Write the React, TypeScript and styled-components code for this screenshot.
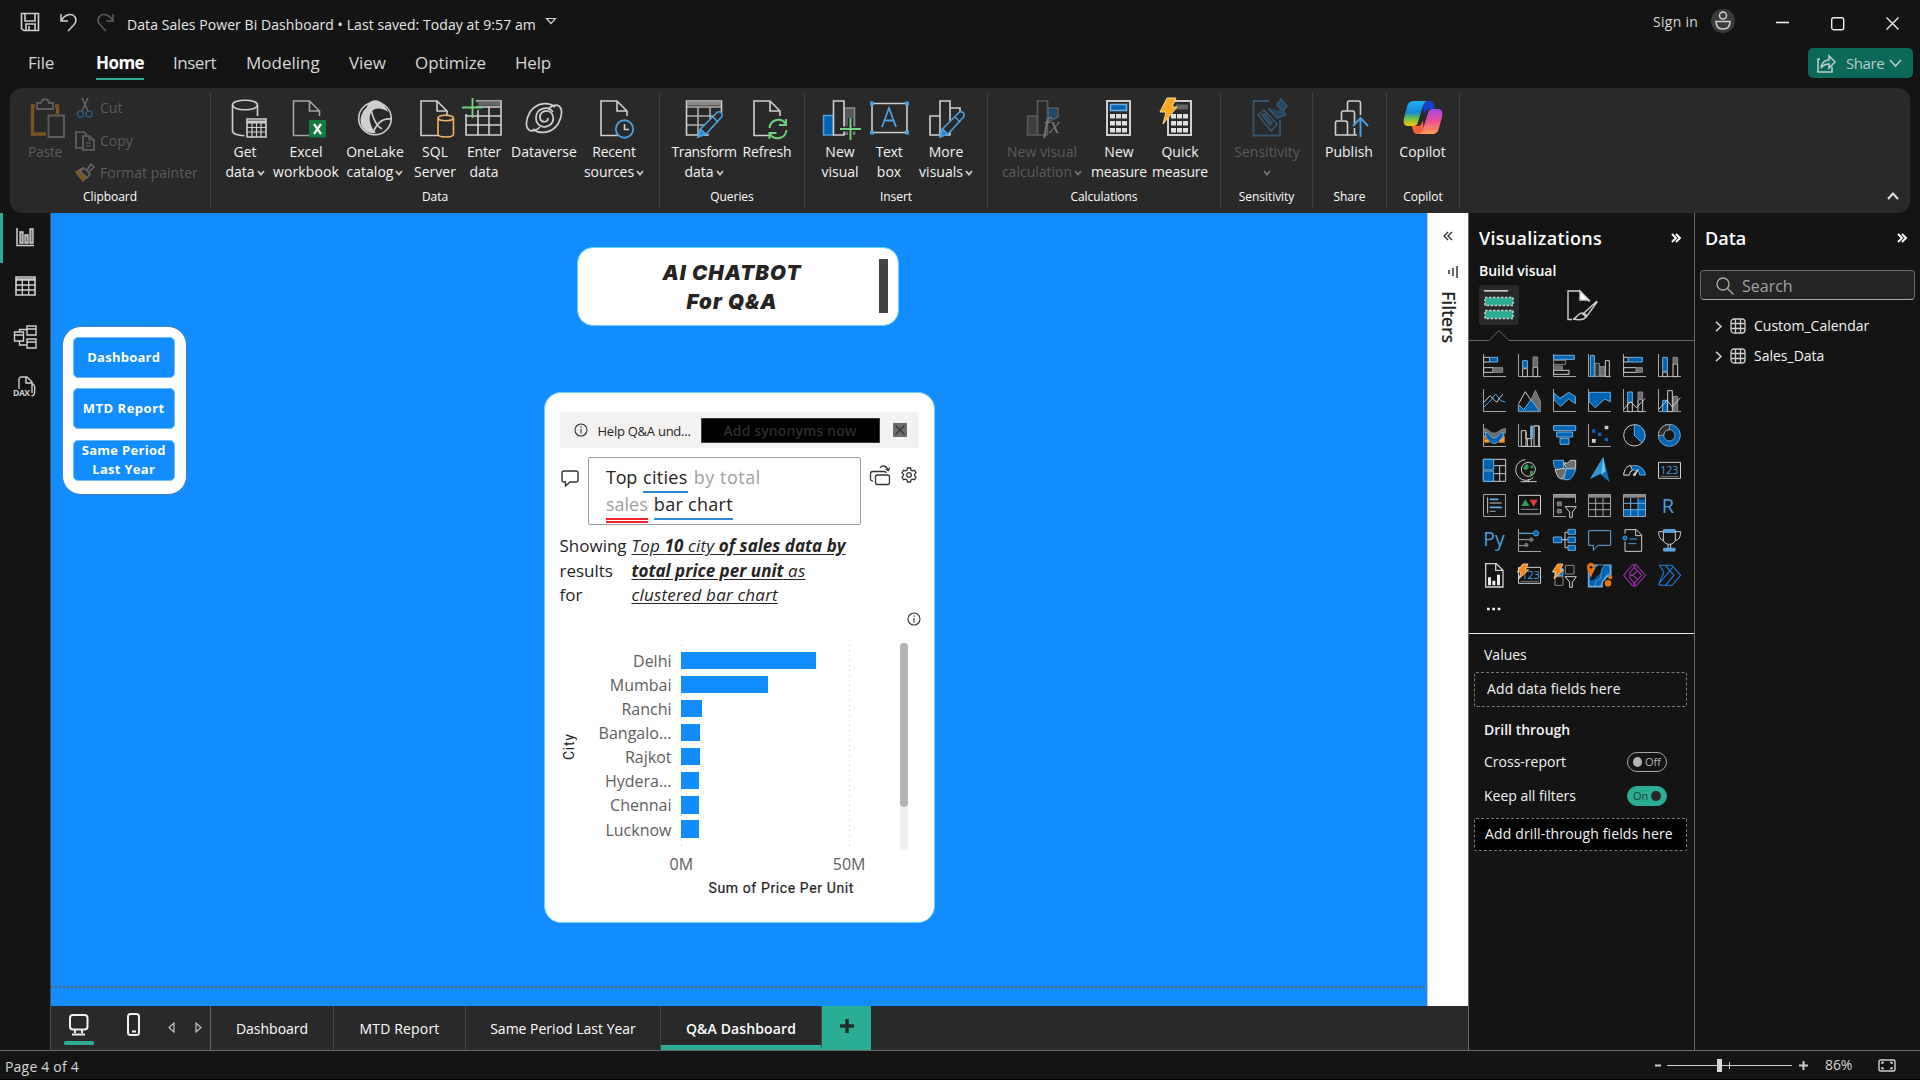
import React from 'react';
import styled, { createGlobalStyle } from 'styled-components';

const sans = '"Open Sans", "Noto Sans", sans-serif';
const C = {
  bg: '#141414',
  panel: '#292929',
  line: '#6a6a6a',
  blue: '#118dff',
  teal: '#2bac94',
  text: '#f3f3f3',
  w: '#cfcfcf',
  g: '#6b6b6b',
  b: '#0063b1',
  lb: '#69afe5',
};

const Global = createGlobalStyle`
  * { box-sizing: border-box; }
  body { margin: 0; background: #141414; overflow: hidden; }
  svg { display: block; overflow: visible; flex: none; }
`;

const Window = styled.div`
  width: 1920px;
  height: 1080px;
  display: flex;
  flex-direction: column;
  background: ${C.bg};
  color: ${C.text};
  font-family: ${sans};
  font-size: 14px;
  line-height: 20px;
  white-space: nowrap;
`;

/* ---------- title bar ---------- */
const TitleBar = styled.header`
  height: 44px;
  flex: none;
  display: flex;
  align-items: flex-start;
  padding: 0 21px 0 20px;
`;
const Slot = styled.div<{ $w: number; $mt?: number; $ml?: number }>`
  width: ${p => p.$w}px;
  flex: none;
  margin-top: ${p => p.$mt ?? 0}px;
  margin-left: ${p => p.$ml ?? 0}px;
`;
const DocTitle = styled.div`
  margin: 15px 0 0 13px;
  letter-spacing: 0.07px;
  color: #e6e6e6;
`;
const Spacer = styled.div`
  flex: 1;
`;
const SignIn = styled.div`
  margin-top: 12px;
  letter-spacing: 0.25px;
  color: #d8d8d8;
`;

/* ---------- menu tabs ---------- */
const MenuRow = styled.nav`
  height: 44px;
  flex: none;
  display: flex;
  align-items: flex-start;
  padding: 4px 7px 0 28px;
`;
const MenuTab = styled.div<{ $w: number; $ml: number; $ls?: number; $active?: boolean }>`
  width: ${p => p.$w}px;
  margin-left: ${p => p.$ml}px;
  height: 32px;
  padding-top: 2px;
  font-size: 17px;
  line-height: 25px;
  letter-spacing: ${p => p.$ls ?? 0}px;
  color: ${p => (p.$active ? '#fff' : '#d6d6d6')};
  font-weight: ${p => (p.$active ? 700 : 400)};
  border-bottom: ${p => (p.$active ? `2px solid ${C.teal}` : '0')};
`;
const ShareButton = styled.button`
  width: 105px;
  height: 30px;
  border: 0;
  border-radius: 5px;
  background: #0c695a;
  color: #b9cdc9;
  display: flex;
  align-items: center;
  padding: 0 11px 0 9px;
  font: 15px ${sans};
  letter-spacing: -0.4px;
`;
const ShareText = styled.span`
  margin: 0 5px 0 10px;
`;

/* ---------- ribbon ---------- */
const Ribbon = styled.section`
  height: 125px;
  flex: none;
  margin: 0 10px;
  border-radius: 12px;
  background: ${C.panel};
  display: flex;
  padding: 5px 0;
`;
const Group = styled.div<{ $w: number }>`
  width: ${p => p.$w}px;
  flex: none;
  border-right: 1px solid #3f3f3f;
  display: flex;
  flex-direction: column;
`;
const GroupBody = styled.div<{ $pl: number }>`
  flex: 1;
  display: flex;
  padding: 5px 0 0 ${p => p.$pl}px;
`;
const GroupLabel = styled.div`
  height: 20px;
  font-size: 12px;
  line-height: 17px;
  letter-spacing: -0.05px;
  text-align: center;
  color: #fff;
`;
const Tool = styled.div<{ $w: number; $ml?: number; $off?: boolean }>`
  width: ${p => p.$w}px;
  margin-left: ${p => p.$ml ?? 0}px;
  flex: none;
  display: flex;
  flex-direction: column;
  align-items: center;
  color: ${p => (p.$off ? '#5c5c5c' : C.text)};
  line-height: 20px;
`;
const ToolLabel = styled.div<{ $ls?: number }>`
  height: 20px;
  display: flex;
  align-items: center;
  gap: 2px;
  letter-spacing: ${p => p.$ls ?? 0}px;
`;
const IconBox = styled.div`
  width: 40px;
  height: 40px;
  margin-bottom: 4px;
`;
const ClipList = styled.div`
  margin-left: 13px;
  display: flex;
  flex-direction: column;
  color: #5c5c5c;
`;
const ClipRow = styled.div<{ $h: number }>`
  height: ${p => p.$h}px;
  display: flex;
  align-items: center;
  gap: 5px;
`;
const Collapse = styled.div`
  margin: 99px 11px 0 auto;
`;

/* ---------- body ---------- */
const Body = styled.main`
  flex: 1;
  display: flex;
  min-height: 0;
`;
const Rail = styled.aside`
  width: 51px;
  flex: none;
  border-right: 1px solid #4c4c4c;
  display: flex;
  flex-direction: column;
`;
const RailItem = styled.div<{ $active?: boolean }>`
  height: 50px;
  border-left: 3px solid ${p => (p.$active ? C.teal : 'transparent')};
  padding: 13px 0 0 10px;
`;
const Center = styled.div`
  width: 1417px;
  flex: none;
  display: flex;
  flex-direction: column;
`;
const Stage = styled.div`
  flex: 1;
  display: flex;
`;
const Report = styled.div`
  position: relative;
  width: 1376px;
  background: ${C.blue};
`;
const PageEdge = styled.div`
  position: absolute;
  left: 0;
  right: 0;
  top: 773px;
  height: 2px;
  background: repeating-linear-gradient(90deg, #66625f 0 2px, transparent 2px 4px);
`;
const Visual = styled.div<{ $x: number; $y: number; $w: number; $h: number; $r: number }>`
  position: absolute;
  left: ${p => p.$x}px;
  top: ${p => p.$y}px;
  width: ${p => p.$w}px;
  height: ${p => p.$h}px;
  border-radius: ${p => p.$r}px;
  background: #fff;
  border: 1px solid #6fd0f5;
  color: #252423;
`;
const NavCard = styled(Visual)`
  border-color: #3c7fc4;
  display: flex;
  flex-direction: column;
  gap: 10.5px;
  padding: 9.5px 11px 0 10.5px;
`;
const NavButton = styled.div<{ $ls: number }>`
  height: 41px;
  border: 1px solid #6dbaff;
  border-radius: 5px;
  background: ${C.blue};
  color: #fff;
  font-size: 13px;
  font-weight: 700;
  line-height: 19px;
  letter-spacing: ${p => p.$ls}px;
  display: flex;
  align-items: center;
  justify-content: center;
  text-align: center;
  white-space: pre-line;
`;
const TitleCard = styled(Visual)`
  display: flex;
  align-items: center;
  justify-content: space-between;
  padding: 0 10px 0 0;
`;
const Headline = styled.div`
  flex: 1;
  padding: 2px 0 0 7px;
  text-align: center;
  font: italic 900 20.5px/29px Inter, sans-serif;
  letter-spacing: 1.05px;
`;
const Grip = styled.div`
  width: 9px;
  height: 54px;
  background: #444;
`;
const QaCard = styled(Visual)`
  padding: 19px 15px 0;
`;
const Banner = styled.div`
  height: 36px;
  background: #f3f2f1;
  display: flex;
  align-items: center;
  padding: 0 12px 0 14px;
  font-size: 13px;
`;
const BannerText = styled.span`
  width: 113px;
  padding-left: 10px;
  letter-spacing: -0.25px;
  padding-top: 2px;
`;
const Synonyms = styled.div`
  width: 179px;
  height: 25px;
  border: 1px solid #3a3a3a;
  background: #000;
  color: #2d2d2d;
  font-weight: 600;
  font-size: 14px;
  line-height: 23px;
  letter-spacing: 0.12px;
  text-align: center;
`;
const CloseBox = styled.div`
  margin-left: auto;
`;
const Ask = styled.div`
  display: flex;
  align-items: flex-start;
  margin-top: 9px;
`;
const Query = styled.div`
  width: 273px;
  height: 68px;
  margin-left: 9px;
  border: 1px solid #a19f9d;
  border-radius: 2px;
  padding: 6px 0 0 17.5px;
  font-size: 18px;
  line-height: 27px;
`;
const QueryLine = styled.div`
  display: flex;
  height: 27px;
  gap: 6px;
`;
const Word = styled.span<{ $ls?: number; $tone?: 'grey' | 'blue' | 'red' }>`
  height: ${p => (p.$tone === 'red' ? 32 : 29)}px;
  letter-spacing: ${p => p.$ls ?? 0}px;
  color: ${p => (p.$tone === 'grey' || p.$tone === 'red' ? '#a19f9d' : '#252423')};
  border-bottom: ${p =>
    p.$tone === 'blue' ? '2px solid #2e88d8' : p.$tone === 'red' ? '5px double #f5222d' : '0'};
`;
const Showing = styled.div`
  display: grid;
  grid-template-columns: 72px 1fr;
  margin-top: 9px;
  font-size: 17px;
  line-height: 24.5px;
`;
const Restated = styled.div`
  font-style: italic;
  text-decoration: underline;
  text-underline-offset: 2px;
  letter-spacing: 0.2px;
  b { font-weight: 700; letter-spacing: 0.02px; }
`;
const InfoRow = styled.div`
  display: flex;
  justify-content: flex-end;
  margin: 4px -2px 0 0;
`;
const Chart = styled.div`
  display: flex;
  margin-top: 17px;
  height: 207px;
`;
const YTitle = styled.div`
  width: 18px;
  writing-mode: vertical-rl;
  transform: rotate(180deg);
  text-align: center;
  font: 400 14px/18px Roboto, sans-serif;
  letter-spacing: 0.7px;
`;
const Categories = styled.div`
  width: 94px;
  padding-top: 6px;
  text-align: right;
  font-size: 16px;
  line-height: 24.15px;
  color: #605e5c;
`;
const Plot = styled.div`
  width: 169px;
  margin-left: 9px;
  padding-top: 9px;
  display: flex;
  flex-direction: column;
  gap: 6.6px;
  background-image: linear-gradient(#c9c9c9 1px, transparent 1px), linear-gradient(#c9c9c9 1px, transparent 1px);
  background-size: 1px 5px, 1px 5px;
  background-position: 0 2px, 168px 2px;
  background-repeat: repeat-y;
`;
const Bar = styled.div`
  height: 17.5px;
  flex: none;
  background: ${C.blue};
`;
const Track = styled.div`
  width: 8px;
  height: 207px;
  margin-left: 50px;
  border-radius: 4px;
  background: #f0f0f0;
`;
const Thumb = styled.div`
  height: 164px;
  border-radius: 4px;
  background: #b3b3b3;
`;
const Ticks = styled.div`
  display: flex;
  justify-content: space-between;
  width: 196px;
  margin: 3px 0 0 110px;
  font-size: 16px;
  line-height: 22px;
  color: #605e5c;
`;
const XTitle = styled.div`
  margin: 3px 0 0 149px;
  font: 400 14px/20px Roboto, sans-serif;
  letter-spacing: 0.62px;
  -webkit-text-stroke: 0.2px #252423;
`;

/* ---------- filters ---------- */
const Filters = styled.aside`
  width: 41px;
  background: #fff;
  border-left: 1px solid #c8c8c8;
  color: #252423;
  display: flex;
  flex-direction: column;
  align-items: center;
  padding-top: 18px;
`;
const FiltersText = styled.div`
  margin: 13px 0 0 2px;
  writing-mode: vertical-rl;
  font-size: 18px;
  font-weight: 600;
  line-height: 22px;
  letter-spacing: -0.24px;
`;

/* ---------- page tabs ---------- */
const Pages = styled.footer`
  height: 44px;
  flex: none;
  display: flex;
  background: ${C.panel};
`;
const PageTools = styled.div`
  width: 160px;
  display: flex;
  align-items: flex-start;
  border-right: 1px solid #666;
  padding: 7px 0 0 13px;
`;
const PageTab = styled.div<{ $w: number; $ls?: number; $active?: boolean }>`
  width: ${p => p.$w}px;
  padding-top: 13px;
  text-align: center;
  letter-spacing: ${p => p.$ls ?? 0}px;
  font-weight: ${p => (p.$active ? 600 : 400)};
  border-right: 1px solid #444;
  border-bottom: ${p => (p.$active ? `5px solid ${C.teal}` : '0')};
  color: #fff;
`;
const AddPage = styled.div`
  width: 49px;
  background: ${C.teal};
  display: flex;
  justify-content: center;
  padding-top: 13px;
`;

/* ---------- side panes ---------- */
const Pane = styled.aside<{ $w: number }>`
  width: ${p => p.$w}px;
  flex: none;
  border-left: 1px solid ${C.line};
`;
const PaneHead = styled.div<{ $ls?: number }>`
  height: 48px;
  display: flex;
  align-items: center;
  justify-content: space-between;
  padding: 1px 13px 0 10px;
  font-size: 18px;
  font-weight: 600;
  letter-spacing: ${p => p.$ls ?? 0}px;
  color: #fff;
`;
const BuildTitle = styled.div`
  height: 24px;
  padding-left: 10px;
  font-weight: 600;
  line-height: 19px;
  color: #fff;
`;
const ModeRow = styled.div`
  display: flex;
  padding-left: 10px;
  height: 46px;
`;
const Mode = styled.div<{ $on?: boolean }>`
  width: 40px;
  height: 40px;
  border-radius: 3px;
  background: ${p => (p.$on ? '#292929' : 'transparent')};
  padding: 5px;
`;
const NotchRule = styled.div`
  height: 10px;
`;
const Gallery = styled.div`
  display: grid;
  grid-template-columns: repeat(6, 23px);
  grid-auto-rows: 23px;
  gap: 12px;
  padding: 13px 0 0 14px;
  height: 293px;
  border-bottom: 1px solid #e8e8e8;
`;
const FieldLabel = styled.div<{ $h: number; $pt?: number; $bold?: boolean }>`
  height: ${p => p.$h}px;
  padding: ${p => p.$pt ?? 0}px 27px 0 15px;
  display: flex;
  align-items: center;
  justify-content: space-between;
  font-weight: ${p => (p.$bold ? 600 : 400)};
`;
const Drop = styled.div<{ $h: number; $pl: number; $dark?: boolean }>`
  width: 213px;
  height: ${p => p.$h}px;
  margin-left: 5px;
  padding-left: ${p => p.$pl}px;
  border: 1px dashed #7a7a7a;
  border-radius: 2px;
  background: ${p => (p.$dark ? '#000' : 'transparent')};
  line-height: ${p => p.$h - 3}px;
  letter-spacing: 0.14px;
`;
const Toggle = styled.div<{ $on?: boolean }>`
  width: 40px;
  height: 20px;
  border-radius: 10px;
  border: 1px solid ${p => (p.$on ? C.teal : '#a9a9a9')};
  background: ${p => (p.$on ? C.teal : 'transparent')};
  color: ${p => (p.$on ? '#1d3d37' : '#b5b5b5')};
  display: flex;
  flex-direction: ${p => (p.$on ? 'row-reverse' : 'row')};
  align-items: center;
  gap: 3px;
  padding: 0 5px;
  font-size: 11px;
`;
const Knob = styled.span<{ $on?: boolean }>`
  width: 10px;
  height: 10px;
  border-radius: 50%;
  background: ${p => (p.$on ? '#262626' : '#b3b3b3')};
`;
const Search = styled.div`
  width: 215px;
  height: 30px;
  margin: 9px 0 11px 5px;
  border: 1px solid #6a6a6a;
  border-bottom-color: #a5a5a5;
  border-radius: 4px;
  background: #232323;
  color: #a3a3a3;
  font-size: 16px;
  display: flex;
  align-items: center;
  gap: 8px;
  padding: 1px 0 0 15px;
`;
const TableRow = styled.div`
  height: 30px;
  display: flex;
  align-items: center;
  padding-left: 20px;
  gap: 8px;
`;

/* ---------- status ---------- */
const Status = styled.footer`
  height: 30px;
  flex: none;
  border-top: 1px solid ${C.line};
  border-bottom: 1px solid #000;
  display: flex;
  align-items: center;
  padding: 1px 24px 0 5px;
  color: #d6d6d6;
`;
const PageCount = styled.span`
  padding-top: 2px;
  letter-spacing: 0.2px;
`;
const Zoom = styled.div`
  width: 28px;
  margin: -1px 25px 0 17px;
  letter-spacing: -0.1px;
`;

/* ---------- icon helpers ---------- */
const Svg = ({ s = 40, h, v, children, ...r }: any) => (
  <svg width={s} height={h ?? s} viewBox={v ?? `0 0 ${s} ${h ?? s}`} fill="none" stroke={C.w} strokeWidth={1.6} {...r}>
    {children}
  </svg>
);
const Chev = ({ c = '#d0d0d0' }: { c?: string }) => (
  <Svg s={8} h={6} stroke={c} strokeWidth={1.7}>
    <path d="M1 2l3 3.600L7 2" />
  </Svg>
);
const Doc = ({ x }: { x: number }) => (
  <g transform={`translate(${x} 0)`}>
    <path d="M27 18V13L17 3H1v34.500H22" />
    <path d="M17 3v10h10" />
  </g>
);
const Pencil = () => (
  <g stroke="#4a9fe0">
    <path d="M14 39l2.500-8L33 14.500c3-2 6.500 1 4.500 4.500L22 36z" fill={C.panel} />
    <path d="M14 39l2.500-8 5 5z" fill="#1f86d6" />
    <path d="M29 19l5 5" />
  </g>
);
const Bolt = () => (
  <path d="M7 0h9l-4 9h5L3 26l3-12H0z" fill="#f5a623" stroke="#ffd88a" strokeWidth={1} />
);
const Calc = () => (
  <g>
    <path d="M8 3h23v34H8z" strokeWidth={2} fill={C.panel} />
    {[17, 24, 31].map(y =>
      [11, 17, 23].map(x => <rect key={`${x}${y}`} x={x} y={y - 1} width="5" height="4.500" fill="#e0e0e0" stroke="none" />),
    )}
  </g>
);

const ic: Record<string, React.ReactNode> = {
  paste: (
    <g stroke="#5f5f5f" transform="translate(6 0)">
      <path d="M4 8H1.500V36H15M24 8h2.500v8" stroke="#7a551f" strokeWidth={3.4} />
      <path d="M6 5h4c1-5 7-5 8 0h4v6H6z" strokeWidth={1.8} fill={C.panel} />
      <path d="M17.500 17.500h15.500V39H17.500z" fill={C.panel} strokeWidth={1.8} />
    </g>
  ),
  get: (
    <g>
      <ellipse cx="20" cy="7" rx="12.500" ry="4.800" />
      <path d="M7.500 7v26c0 2.500 5 4.500 12 4.700M32.500 7v11" />
      <path d="M22 21h19v18H22z" fill={C.panel} />
      <path d="M22 24h19" strokeWidth={3} />
      <path d="M22 29.500h19M22 34h19M27 25v14M31.500 25v14M36 25v14" strokeWidth={1.2} />
    </g>
  ),
  excel: (
    <g>
      <g opacity=".75"><Doc x={6.5} /></g>
      <rect x="23" y="22" width="17" height="17.500" fill="#107c41" stroke="none" />
      <path d="M28 26l7 10M35 26l-7 10" stroke="#fff" strokeWidth={2.2} />
    </g>
  ),
  onelake: (
    <g>
      <circle cx="20" cy="20.500" r="16.300" />
      <path d="M12 9C14 0 26 0 30 9c2 2 2 3 3 5-5-4-12-5-16-1-4 5-3 14 4 22C6 37 0 20 12 9z" fill={C.w} stroke="none" />
      <path d="M16 12c3 12 7 17 11 19M18 35c4-11 10-15 18-14" />
    </g>
  ),
  sql: (
    <g>
      <Doc x={5} />
      <path d="M23 20v16c0 4 15.500 4 15.500 0V20" stroke="#f0b366" fill={C.panel} />
      <ellipse cx="30.700" cy="20" rx="7.700" ry="2.800" stroke="#f0b366" fill={C.panel} />
    </g>
  ),
  enter: (
    <g>
      <path d="M2 16v21h35V3H12" />
      <path d="M14 5.500h22" stroke="#666" strokeWidth={4.5} />
      <path d="M12 9h25M2 18h35M2 27h35M14 12v25M25 9v28" />
      <path d="M8.500 0v20M-2 9.500H18" stroke="#6fd37f" strokeWidth={1.8} />
    </g>
  ),
  dataverse: (
    <g strokeWidth={1.7}>
      <path d="M31 9C24 3 12 5 6 14c-4 7-5 15-1 18 3 2 8 0 11-3" />
      <path d="M9 31c7 6 19 4 25-5 4-7 5-15 1-18-3-2-8 0-11 3" />
      <path d="M29 14c-5-7-17-4-17 6 0 8 8 11 14 7 5-4 4-12-2-14-5-1-9 3-8 7 1 5 8 5 8 0" />
    </g>
  ),
  recent: (
    <g>
      <Doc x={6} />
      <circle cx="30.500" cy="31" r="8.700" stroke="#4a9fe0" fill={C.panel} strokeWidth={1.9} />
      <path d="M30.500 26v5.500h4.500" />
    </g>
  ),
  transform: (
    <g>
      <path d="M2.500 3h35v34h-35z" />
      <path d="M3 5.500h34" stroke="#8a8a8a" strokeWidth={4} />
      <path d="M2 9h35M2 18h28M2 27h20M14 9v28M26 9v14" opacity=".8" />
      <path d="M24 38.500h15V14z" fill={C.panel} stroke="none" />
      <Pencil />
    </g>
  ),
  refresh: (
    <g>
      <Doc x={6} />
      <circle cx="31" cy="31" r="11" fill={C.panel} stroke="none" />
      <path d="M22.500 30c1-9 12-11 16.500-4M39 21v6h-7M39.500 32c-1 9-12 11-16.500 4M22.500 41v-6h7" stroke="#6fd37f" strokeWidth={1.9} />
    </g>
  ),
  newvisual: (
    <g>
      <path d="M24 10h10.500v26H24z" fill="#5a5a5a" stroke="#8a8a8a" />
      <path d="M3.500 17.500h10V37h-10z" fill={C.b} stroke="#4a9fe0" />
      <path d="M13.500 3h10.500v34H13.500z" fill={C.panel} />
      <path d="M30.500 20v22M20 31h21" stroke={C.panel} strokeWidth={5} />
      <path d="M30.500 20v22M20 31h21" stroke="#6fd37f" strokeWidth={1.9} />
    </g>
  ),
  textbox: (
    <g>
      <path d="M3 5.500h35v29H3z" />
      <path d="M13 29l7-19 7 19M15.500 22.500h9" stroke="#4a9fe0" strokeWidth={1.8} />
      {[[1, 3.5], [36, 3.5], [1, 32.5], [36, 32.5]].map(([x, y]) => (
        <rect key={`${x}${y}`} x={x} y={y} width="4" height="4" fill="#4a9fe0" stroke="none" />
      ))}
    </g>
  ),
  more: (
    <g>
      <path d="M4 18h10v19H4zM14 3h10v34H14zM24 10h10v27H24z" />
      <path d="M22 41h16V18z" fill={C.panel} stroke="none" />
      <Pencil />
    </g>
  ),
  nvc: (
    <g stroke="#5a5a5a">
      <path d="M5.500 18h10v19h-10z" fill="#3f3f3f" />
      <path d="M15.500 3h10v34h-10z" />
      <path d="M26 10h10v9l-10 5z" fill="#1d4a6b" />
    </g>
  ),
  calc: (
    <g>
      <Calc />
      <rect x="11.500" y="6.500" width="16" height="6" fill={C.b} stroke={C.lb} />
    </g>
  ),
  quick: (
    <g>
      <Calc />
      <rect x="16" y="6.500" width="12" height="5" fill="#666" stroke="none" />
      <Bolt />
    </g>
  ),
  sens: (
    <g stroke="#35566e">
      <path d="M33 22v15.500H6.500V3H22" strokeWidth={1.8} />
      <path d="M11 17l6-5 13 14-6 7z" fill={C.panel} />
      <path d="M15 17l3-1 7 9-2 2zM21 10l9 10 9-3-9-10 4-6 6 7-4 5" fill="#24465f" />
    </g>
  ),
  publish: (
    <g>
      <path d="M12.500 22V15c0-1 1-2 2-2h4V5c0-1 1-2 2-2h9c1 0 2 1 2 2v12M18.500 13h5c1 0 2 1 2 2v11M8 23h8c1.500 0 2.500 1 2.500 2.500V37H6.500V25c0-1 .5-2 1.500-2zM18.500 37H28M25.500 37v-7" />
      <path d="M31.500 39V20.500M24 28l7.500-8 7.500 8" stroke="#4a9fe0" strokeWidth={1.9} />
    </g>
  ),
  copilot: (
    <g stroke="none" transform="translate(-1 0)">
      <defs>
        <linearGradient id="cpA" x1="0" y1="0" x2="0" y2="1">
          <stop offset="0" stopColor="#1fb0f5" /><stop offset=".45" stopColor="#1689d8" /><stop offset=".7" stopColor="#6bc04b" /><stop offset="1" stopColor="#f7c70c" />
        </linearGradient>
        <linearGradient id="cpB" x1="0" y1="0" x2="0" y2="1">
          <stop offset="0" stopColor="#a348e8" /><stop offset=".5" stopColor="#ee5091" /><stop offset="1" stopColor="#ffa34d" />
        </linearGradient>
      </defs>
      <path d="M20 3h8c3 0 4 3 5 8h-5c-4 0-5 3-6 6z" fill="#1440c8" />
      <path d="M22 36h-7c-3 0-4-3-5-8h6c3 0 4-3 5-6z" fill="#f5633a" />
      <path d="M12 3h13c-3 1-4 4-5 8l-4 13c-1 3-2 4-5 4H6c-4 0-5-3-4-8l3-11c1-4 3-6 7-6z" fill="url(#cpA)" />
      <path d="M30 36H17c3-1 4-4 5-8l4-13c1-3 2-4 5-4h5c4 0 5 3 4 8l-3 11c-1 4-3 6-7 6z" fill="url(#cpB)" />
    </g>
  ),
};

const Button = ({ icon, a, b, w, ml, off, ls, chev }: any) => (
  <Tool $w={w} $ml={ml} $off={off}>
    <IconBox><Svg>{ic[icon]}{icon === 'nvc' && <text x="21" y="35" fill="#777" stroke="none" fontSize="23" fontStyle="italic" fontFamily="Liberation Serif, serif">fx</text>}</Svg></IconBox>
    <ToolLabel $ls={ls?.[0]}>{a}</ToolLabel>
    <ToolLabel $ls={ls?.[1]}>{b}{chev && <Chev c={off ? '#777' : undefined} />}</ToolLabel>
  </Tool>
);

/* ---------- gallery icons (69 unit grid) ---------- */
const axis = <path d="M1.500 0V67.500H69" stroke="#a5a5a5" />;
const fb = { fill: C.b, stroke: C.lb };
const fg = { fill: C.g, stroke: '#8a8a8a' };
const no = { fill: C.bg, stroke: C.w };
const bolt69 = <path d="M14 0h16L22 18h10L3 44l6-20H-2z" fill="#f5851f" stroke="#ffd9a0" strokeWidth={2.5} />;
const gallery: React.ReactNode[] = [
  <>{axis}<path d="M2 10h18v14H2zM2 41h28v14H2z" {...no} /><path d="M20 10h24v14H20z" {...fb} /><path d="M30 41h29v14H30z" {...fg} /></>,
  <>{axis}<path d="M14 44h14v24H14zM45 40h14v28H45z" {...no} /><path d="M14 20h14v22H14z" {...fb} /><path d="M45 9h14v30H45z" {...fg} /></>,
  <>{axis}<path d="M2 49h46v12H2z" {...no} /><path d="M2 36h26v12H2z" {...fg} /><path d="M2 19h36v12H2z" fill={C.bg} stroke="#8a8a8a" /><path d="M2 4h62v12H2z" {...fb} /></>,
  <>{axis}<path d="M52 20h12v48H52z" {...no} /><path d="M36 38h14v28H36z" {...fg} /><path d="M21 28h13v39H21z" {...fg} fill="#333" /><path d="M7 4h12v63H7z" {...fb} /></>,
  <>{axis}<path d="M2 10h14v14H2zM2 41h38v14H2z" {...no} /><path d="M16 10h42v14H16z" {...fb} /><path d="M40 41h18v14H40z" {...fg} /></>,
  <>{axis}<path d="M14 54h14v14H14zM45 30h14v38H45z" {...no} /><path d="M14 10h14v42H14z" {...fb} /><path d="M45 10h14v20H45z" {...fg} /></>,

  <>{axis}<path d="M3 54L24 33l14-18 15 20 14 4" stroke="#4a9fe0" /><path d="M3 40l18-20 20 20 8-12 10-12" /></>,
  <><path d="M38 36L52 4l15 32v31H52z" {...fg} /><path d="M2 44L22 8l18 28" /><path d="M1 46l16 16 22-30 26 35H1z" {...fb} /><path d="M1.500 44v24H69" stroke="#8a8a8a" /></>,
  <>{axis}<path d="M3 12l18 16L47 10l20 12v22L47 30 23 52 3 32z" {...fb} /></>,
  <>{axis}<path d="M3 10h64v28L50 30 22 56 3 38z" {...fb} /></>,
  <>{axis}<path d="M14 40h14v28H14zM45 32h14v36H45z" {...no} /><path d="M14 9h14v31H14z" {...fb} /><path d="M45 9h14v22H45z" {...fg} /><path d="M3 60l20-22 17 18 27-28" /></>,
  <>{axis}<path d="M14 34h14v34H14z" {...fb} /><path d="M45 22h14v46H45z" {...fg} /><path d="M29 5h14v63H29z" {...no} /><path d="M3 60l24-26 16 20 24-28" /></>,

  <>{axis}<path d="M4 35h14v8H4zM48 35h16v20H48zM4 46h14v9H4z" fill="#f7a04a" stroke="#d96b00" /><path d="M3 14c14 0 18 14 30 14s18-14 34-14v14c-16 0-20 14-34 14S17 26 3 26z" {...fg} /><path d="M8 24c14 4 14 18 26 18s14-16 26-18v16c-8 2-12 18-26 18S14 42 8 40z" {...fb} /></>,
  <>{axis}<path d="M10 20h14v47H10zM24 24v20h20M46 6h18v61" /><path d="M28 44h12v23H28zM48 6h14v61H48z" fill={C.bg} /><path d="M38 44V6h6v34z" fill={C.lb} stroke={C.lb} /></>,
  <><path d="M2 5h66v15H2z" {...fb} /><path d="M11 24h48v15H11z" {...fb} /><path d="M21 43h27v18H21z" {...fb} /></>,
  <>{axis}<g stroke="none"><path d="M50 5h11v11H50zM12 45h11v11H12z" fill={C.w} /><path d="M12 16h10v10H12zM30 26h10v10H30zM50 42h10v10H50z" fill="#0f63b8" /></g></>,
  <><circle cx="34" cy="34" r="32" /><path d="M34 2a32 32 0 0 1 23 54L34 34z" {...fb} /></>,
  <><circle cx="34" cy="34" r="25" stroke={C.b} strokeWidth={14} /><circle cx="34" cy="34" r="33" stroke={C.lb} /><circle cx="34" cy="34" r="17" stroke={C.lb} /><path d="M9 34A25 25 0 0 1 34 9" stroke="#2c2c2c" strokeWidth={14} /><path d="M1 34A33 33 0 0 1 34 1v16a17 17 0 0 0-17 17z" stroke="#9a9a9a" /></>,

  <><path d="M1 1h67v66H1z" {...no} /><path d="M1 1h31v32H1zM1 36h31v31H1z" {...fb} /><path d="M34 20h34M50 20v47M34 44h16M50 44h18" /></>,
  <><circle cx="31" cy="31" r="21" /><path d="M16 30c0-8 6-14 13-14l4 8-8 10zM36 36h10c2 6-4 14-10 14zM38 18l8 4v6h-8z" fill="#2f9e4f" stroke="none" /><path d="M22 2A31 31 0 1 0 46 55M32 60v8M8 68h48" /></>,
  <><path d="M1 4h31v26L14 34C2 26 1 14 1 4z" {...fb} /><path d="M32 12h12l8-8h16v24H40z" fill={C.g} stroke={C.w} /><path d="M6 32l30-4 4 10-12 22c-14 0-16-14-22-28z" fill={C.g} stroke={C.w} /><path d="M40 30h28c-4 16-10 24-18 32H32z" {...fb} /></>,
  <g stroke="none"><path d="M46-6L6 60l40-20z" fill="#4bb6e0" /><path d="M46-6v46L6 60z" fill="#2f94cf" /><path d="M46-6l19 76-26-23z" fill="#1272bd" /><path d="M46-6l7 43-14 10z" fill="#62c4e8" /></g>,
  <><path d="M2 48C4 10 64 10 67 48H50c0-20-30-20-31 0z" {...fb} /><path d="M2 48C4 30 12 22 22 19l6 14c-6 4-8 8-9 15z" fill={C.bg} /><path d="M30 48l16-18-10 20z" fill={C.w} /></>,
  <><path d="M1.500 10h66v48h-66z" {...no} /><path d="M8 52h54" strokeWidth={3} stroke="#777" /><text x="34" y="44" textAnchor="middle" fill="#4a9fe0" stroke="none" fontSize="32" fontFamily="Open Sans">123</text></>,

  <><path d="M1.500 1.500h66v66h-66z" stroke="#a5a5a5" /><path d="M14 10v48" /><path d="M20 16h26M20 40h36" stroke={C.lb} strokeWidth={5} /><path d="M20 27h36M20 52h18" stroke="#8a8a8a" strokeWidth={4} /></>,
  <><path d="M1.500 4h66v56h-66z" /><path d="M8 46h53" stroke="#8a8a8a" /><path d="M10 36l12-20 12 20z" fill="#2f9e4f" stroke="none" /><path d="M35 17h24L47 38z" fill="#e33b3b" stroke="none" /></>,
  <><path d="M1.500 1.500h66v8h-66z" fill="#8a8a8a" stroke="#a5a5a5" /><path d="M1.500 9v58.500H38M67.500 9v18" stroke="#a5a5a5" /><path d="M13 24h12v11H13zM13 46h12v11H13z" {...fg} /><path d="M36 38h34L58 54v16h-8V54z" {...no} /></>,
  <><path d="M1.500 1.500h66v66h-66z" stroke="#a5a5a5" /><path d="M1.500 6h66" strokeWidth={10} stroke="#8a8a8a" /><path d="M1 28h67M1 47h67M23 12v55M45 12v55" stroke="#a5a5a5" /></>,
  <><path d="M45 16h22v51H3V47h42z" fill={C.b} stroke="none" /><path d="M1.500 1.500h66v66h-66z" stroke="#a5a5a5" /><path d="M1.500 6h66" strokeWidth={10} stroke="#8a8a8a" /><path d="M1 28h67M1 47h67M23 12v55M45 12v55" stroke={C.lb} /></>,
  <text x="30" y="56" textAnchor="middle" fill="#4a9fe0" stroke="none" fontSize="60" fontWeight="500" fontFamily="Open Sans">R</text>,

  <text x="33" y="51" textAnchor="middle" fill="#4a9fe0" stroke="none" fontSize="58" fontWeight="500" fontFamily="Open Sans">Py</text>,
  <>{axis}<path d="M2 13h46M2 32h32M2 50h18" stroke="#a5a5a5" /><path d="M2 13h46" stroke="#4a9fe0" /><circle cx="54" cy="13" r="8" fill={C.b} stroke="#4a9fe0" /><circle cx="40" cy="32" r="5" {...fg} /><circle cx="25" cy="48" r="5" {...fg} /></>,
  <><path d="M24 32h20M36 10v46M36 10h8M36 56h8" /><path d="M1 24h25v17H1zM45 1h22v15H45zM45 24h22v17H45zM45 49h22v15H45z" {...fb} /></>,
  <path d="M2 5h66v44H30L16 64V49H2z" stroke="#6fa8d8" />,
  <><path d="M6 14V2h34l16 16v49H6V38M38 2v18h18" /><circle cx="6" cy="27" r="6" fill={C.b} stroke="#4a9fe0" /><path d="M20 30h22" stroke="#4a9fe0" /><path d="M16 44h24" stroke="#4a9fe0" /></>,
  <><path d="M16 8H2c0 16 6 26 16 26M52 8h16c0 16-6 26-16 26M16 4h36v30c-4 8-10 12-18 12S18 42 16 34zM30 46v12M38 46v12" /><path d="M17 2h34v8H17zM17 58h34v8H17z" {...fb} fill="#4a9fe0" /></>,

  <><path d="M8-1h32l20 20v50H8zM38-1v20h22" strokeWidth={4} /><g fill="#eee" stroke="none"><path d="M15 40h9v24h-9zM28 50h9v14h-9zM42 32h9v32h-9z" /></g></>,
  <><path d="M1.500 10h66v48h-66z" {...no} /><path d="M8 52h54" stroke="#777" /><text x="38" y="44" textAnchor="middle" fill="#4a9fe0" stroke="none" fontSize="32" fontFamily="Open Sans">123</text>{bolt69}</>,
  <><path d="M37 4h26v26H37z" stroke="#8a8a8a" /><path d="M6 14h24v20H6z" {...fb} /><path d="M6 38h24v26H6z" stroke="#8a8a8a" /><path d="M36 38h34L58 54v16h-8V54z" {...no} />{bolt69}</>,
  <><path d="M2 4h66v30c-20 0-10 14-26 18v16H2z" fill={C.b} stroke={C.lb} strokeWidth={5} /><path d="M30 4h24c-4 10-14 4-14 16-2 14-14 14-20 26l-12 4V34z" fill={C.bg} stroke="none" /><path d="M48 4h18v24c-14 2-12 14-22 20l-6 18H20l4-14 14-8 2-22z" fill={C.b} stroke={C.lb} strokeWidth={2} /><path d="M-3 10C-3-8 21-8 21 10c0 12-8 14-10 28h-4C5 24-3 22-3 10z" fill="#e8740c" stroke="none" /><circle cx="9" cy="10" r="4" fill={C.bg} stroke="none" /><circle cx="60" cy="58" r="13" fill={C.bg} stroke="none" /><circle cx="60" cy="58" r="10" fill="#e8740c" stroke="none" /><circle cx="67" cy="40" r="6" fill="#e8740c" stroke="none" /></>,
  <g stroke="#a02fb0" strokeWidth={3.2}><path d="M28 3L2 34l26 31c5 4 10-2 7-7L22 44c-6-6 2-14 8-9M40 3l27 31-27 31c-5 4-10-2-7-7L56 34 34 10c-3-5 2-11 6-7z" /><path d="M28 3c5-4 10 2 7 7L22 24c-6 6 2 14 8 9l13-13M30 35l12 10" /></g>,
  <g stroke="#1f80e0" strokeWidth={3.2}><path d="M4 4h38l26 30-26 30H22l26-30L22 4M4 4l14 20M18 24L2 60c0 4 4 4 20 4M2 60L44 10M34 18l10 12" /></g>,
  <g fill="#f3f3f3" stroke="none"><path d="M12 26h8v8h-8zM28 26h8v8h-8zM44 26h8v8h-8z" /></g>,
];

const bars: [string, number][] = [
  ['Delhi', 135], ['Mumbai', 87], ['Ranchi', 21], ['Bangalo...', 19],
  ['Rajkot', 19], ['Hydera...', 18], ['Chennai', 18], ['Lucknow', 18],
];

const Info = () => (
  <Svg s={14} stroke="#333" strokeWidth={1.1}>
    <circle cx="7" cy="7" r="6" /><path d="M7 6v4.500M7 3.300v1.400" />
  </Svg>
);
const Double = ({ flip, c = '#fff' }: { flip?: boolean; c?: string }) => (
  <Svg s={10} stroke={c} strokeWidth={flip ? 1.4 : 1.9}>
    <path d={flip ? 'M5 1L1 5l4 4M9 1L5 5l4 4' : 'M1 1l4 4-4 4M5 1l4 4-4 4'} />
  </Svg>
);
const TableIcon = () => (
  <Svg s={16} strokeWidth={1.3}><rect x="1" y="1" width="14" height="14" rx="3" /><path d="M1 5.500h14M1 10.500h14M5.500 1v14M10.500 1v14" /></Svg>
);

export default function App() {
  return (
    <Window>
      <Global />
      <TitleBar>
        <Slot $w={20} $mt={12}>
          <Svg s={20}><path d="M1.500 1.500h17v17H4l-2.500-2zM5 1.500V9h10V1.500M6 18v-6h9v6M9 14v4" /></Svg>
        </Slot>
        <Slot $w={18} $ml={20} $mt={13}>
          <Svg s={18}><path d="M1 1v7h7M1.500 7.500C5 1 12 0 15 4c3 5-1 8-7 14" strokeWidth={1.5} /></Svg>
        </Slot>
        <Slot $w={18} $ml={18} $mt={13}>
          <Svg s={18} stroke="#5e5e5e"><path d="M17 1v7h-7M16.500 7.500C13 1 6 0 3 4c-3 5 1 8 7 14" strokeWidth={1.5} /></Svg>
        </Slot>
        <DocTitle>Data Sales Power Bi Dashboard • Last saved: Today at 9:57 am</DocTitle>
        <Slot $w={10} $ml={10} $mt={18}>
          <Svg s={10} h={6} strokeWidth={1.2}><path d="M.5.5h9L5 5.500z" /></Svg>
        </Slot>
        <Spacer />
        <SignIn>Sign in</SignIn>
        <Slot $w={24} $ml={13} $mt={9}>
          <Svg s={24} strokeWidth={1.5}><circle cx="12" cy="12" r="12" fill="#3a3a3a" stroke="none" /><circle cx="12" cy="6.500" r="3.500" /><path d="M5 12.500h14c0 5-3 7.500-7 7.500s-7-2.500-7-7.500z" /></Svg>
        </Slot>
        <Slot $w={13} $ml={41} $mt={22}><Svg s={13} h={1}><path d="M0 .5h13" stroke="#eee" /></Svg></Slot>
        <Slot $w={13} $ml={42} $mt={17}><Svg s={13}><rect x=".7" y=".7" width="12" height="12" rx="2" stroke="#eee" strokeWidth={1.4} /></Svg></Slot>
        <Slot $w={13} $ml={42} $mt={17}><Svg s={13}><path d="M.5.5l12 12M12.500.5l-12 12" stroke="#eee" strokeWidth={1.4} /></Svg></Slot>
      </TitleBar>

      <MenuRow>
        <MenuTab $w={26} $ml={0} $ls={-0.2}>File</MenuTab>
        <MenuTab $w={48} $ml={42} $ls={-0.57} $active>Home</MenuTab>
        <MenuTab $w={43} $ml={29} $ls={-0.47}>Insert</MenuTab>
        <MenuTab $w={74} $ml={30}>Modeling</MenuTab>
        <MenuTab $w={37} $ml={29} $ls={-0.1}>View</MenuTab>
        <MenuTab $w={71} $ml={29} $ls={-0.06}>Optimize</MenuTab>
        <MenuTab $w={36} $ml={29} $ls={-0.19}>Help</MenuTab>
        <Spacer />
        <ShareButton>
          <Svg s={19} stroke="#b9cdc9"><path d="M3 5H1v13h14v-5" /><path d="M4 14c1-6 4-8 8-8V2l6 6-6 6v-4c-4 0-6 1-8 4z" /></Svg>
          <ShareText>Share</ShareText>
          <Svg s={13} h={8} stroke="#b9cdc9"><path d="M1 1l5.500 6L12 1" /></Svg>
        </ShareButton>
      </MenuRow>

      <Ribbon>
        <Group $w={201}>
          <GroupBody $pl={18}>
            <Button icon="paste" a="Paste" w={34} off ls={[-0.34]} />
            <ClipList>
              <ClipRow $h={20}>
                <Svg s={20} stroke="#666"><path d="M7 0l6 13M13 0L7 13" /><circle cx="5.500" cy="16" r="3" stroke="#2f5577" /><circle cx="14" cy="16" r="3" stroke="#2f5577" /></Svg>Cut
              </ClipRow>
              <ClipRow $h={46}>
                <Svg s={20} stroke="#666"><path d="M8 17H1V1h8l3 3" /><path d="M8 5h6l5 4v10H8z" fill={C.panel} /><path d="M14 5v4h5M11 12h5M11 15h5" strokeWidth={1.2} /></Svg>Copy
              </ClipRow>
              <ClipRow $h={18}>
                <Svg s={20} stroke="#666"><path d="M1 9l7 9 6-7-6-6z" fill="#7a551f" stroke="#7a6236" /><path d="M5 8l4-3 6 6-3 4zM12 7l4-6 3 3-5 5" fill={C.panel} /></Svg>Format painter
              </ClipRow>
            </ClipList>
          </GroupBody>
          <GroupLabel>Clipboard</GroupLabel>
        </Group>
        <Group $w={449}>
          <GroupBody $pl={14}>
            <Button icon="get" a="Get" b="data" chev w={40} />
            <Button icon="excel" a="Excel" b="workbook" w={66} ml={8} ls={[0, 0.1]} />
            <Button icon="onelake" a="OneLake" b="catalog" chev w={60} ml={6} />
            <Button icon="sql" a="SQL" b="Server" w={44} ml={8} />
            <Button icon="enter" a="Enter" b="data" w={36} ml={9} ls={[-0.2]} />
            <Button icon="dataverse" a="Dataverse" w={66} ml={9} />
            <Button icon="recent" a="Recent" b="sources" chev w={62} ml={6} ls={[-0.2, -0.1]} />
          </GroupBody>
          <GroupLabel>Data</GroupLabel>
        </Group>
        <Group $w={145}>
          <GroupBody $pl={11}>
            <Button icon="transform" a="Transform" b="data" chev w={66} ls={[-0.36]} />
            <Button icon="refresh" a="Refresh" w={50} ml={5} ls={[-0.15]} />
          </GroupBody>
          <GroupLabel>Queries</GroupLabel>
        </Group>
        <Group $w={183}>
          <GroupBody $pl={16}>
            <Button icon="newvisual" a="New" b="visual" w={38} />
            <Button icon="textbox" a="Text" b="box" w={30} ml={15} ls={[-0.3]} />
            <Button icon="more" a="More" b="visuals" chev w={56} ml={14} />
          </GroupBody>
          <GroupLabel>Insert</GroupLabel>
        </Group>
        <Group $w={233}>
          <GroupBody $pl={13}>
            <Button icon="nvc" a="New visual" b="calculation" chev w={82} off />
            <Button icon="calc" a="New" b="measure" w={56} ml={8} ls={[0, -0.2]} />
            <Button icon="quick" a="Quick" b="measure" w={56} ml={5} ls={[0, -0.2]} />
          </GroupBody>
          <GroupLabel>Calculations</GroupLabel>
        </Group>
        <Group $w={92}>
          <GroupBody $pl={13}><Button icon="sens" a="Sensitivity" chev w={66} off /></GroupBody>
          <GroupLabel>Sensitivity</GroupLabel>
        </Group>
        <Group $w={74}>
          <GroupBody $pl={12}><Button icon="publish" a="Publish" w={48} /></GroupBody>
          <GroupLabel>Share</GroupLabel>
        </Group>
        <Group $w={73}>
          <GroupBody $pl={11}><Button icon="copilot" a="Copilot" w={49} /></GroupBody>
          <GroupLabel>Copilot</GroupLabel>
        </Group>
        <Collapse><Svg s={12} h={8} stroke="#e0e0e0" strokeWidth={2}><path d="M1 7l5-5.500L11 7" /></Svg></Collapse>
      </Ribbon>

      <Body>
        <Rail>
          <RailItem $active>
            <Svg s={24}><path d="M4 2v17.500h17" strokeWidth={1.5} /><path d="M7 6h3v11H7zM12 9h3v8h-3zM17 3h3v14h-3z" strokeWidth={1.3} fill="#777" /></Svg>
          </RailItem>
          <RailItem>
            <Svg s={24}><path d="M3 1h19v18H3z" /><path d="M3 3.500h19" strokeWidth={2.5} /><path d="M3 9h19M3 14h19M9.300 4v15M15.700 4v15" strokeWidth={1.3} /></Svg>
          </RailItem>
          <RailItem>
            <Svg s={24} strokeWidth={1.4}><path d="M14 0h9v9h-9zM14 13h9v9h-9zM1.500 6h9v9h-9zM14 3h9M14 16h9M1.500 9h9M14 3.500H6.500V6M14 19H6.500v-4" /></Svg>
          </RailItem>
          <RailItem>
            <Svg s={24} strokeWidth={1.4}><path d="M6 13V3c0-1 1-2 2-2h6l5 5v11M13 1v6h6M19 7c3 2 3 4 2.500 10-.3 2-1 3-3 3" /><text x="0" y="20" fontSize="8.500" fontWeight="700" fontFamily="Open Sans" fill={C.w} stroke="none" textLength="17">DAX</text></Svg>
          </RailItem>
        </Rail>

        <Center>
          <Stage>
            <Report>
              <NavCard $x={10.5} $y={113} $w={125} $h={169} $r={19}>
                <NavButton $ls={0.25}>Dashboard</NavButton>
                <NavButton $ls={0.5}>MTD Report</NavButton>
                <NavButton $ls={0.3}>{'Same Period\nLast Year'}</NavButton>
              </NavCard>
              <TitleCard $x={526} $y={34} $w={322} $h={78.5} $r={16}>
                <Headline>AI CHATBOT<br />For Q&amp;A</Headline>
                <Grip />
              </TitleCard>
              <QaCard $x={492.5} $y={179} $w={391} $h={531} $r={17}>
                <Banner>
                  <Info />
                  <BannerText>Help Q&amp;A und...</BannerText>
                  <Synonyms>Add synonyms now</Synonyms>
                  <CloseBox>
                    <Svg s={14} stroke="#333" strokeWidth={1.2}><rect width="14" height="14" fill="#6c6c6c" stroke="none" /><path d="M2.500 2.500l9 9M11.500 2.500l-9 9" /></Svg>
                  </CloseBox>
                </Banner>
                <Ask>
                  <Slot $w={18} $ml={1} $mt={13}>
                    <Svg s={18} stroke="#333" strokeWidth={1.4}><path d="M3 1h12c1.300 0 2 .7 2 2v7c0 1.300-.7 2-2 2H9l-4.500 4v-4H3c-1.300 0-2-.7-2-2V3c0-1.300.7-2 2-2z" /></Svg>
                  </Slot>
                  <Query>
                    <QueryLine>
                      <Word $ls={-0.25}>Top</Word><Word $tone="blue" $ls={0.3}>cities</Word><Word $tone="grey" $ls={0.55}>by total</Word>
                    </QueryLine>
                    <QueryLine>
                      <Word $tone="red" $ls={0}>sales</Word><Word $tone="blue" $ls={0.3}>bar chart</Word>
                    </QueryLine>
                  </Query>
                  <Slot $w={20} $ml={9} $mt={8}>
                    <Svg s={20} stroke="#333" strokeWidth={1.3}><rect x="5.500" y="10" width="14" height="9.500" rx="2" /><path d="M3 16c-2 0-2.500-1-2.500-2V9c0-2 1-2.500 2.500-2.500h11c1 0 2 .5 2 1.500M10 3c2-3 6-3 8 2M15.500 4.500l3 1 1-3" /></Svg>
                  </Slot>
                  <Slot $w={16} $ml={11} $mt={10}>
                    <Svg s={16} stroke="#333" strokeWidth={1.3}><circle cx="8" cy="8" r="2.300" /><path d="M6.500 1h3l.5 2 1.500.9 2-.6 1.500 2.600L13.500 7.400v1.200L15 10.100l-1.500 2.600-2-.6-1.500.9-.5 2h-3L6 13l-1.500-.9-2 .6L1 10.100l1.500-1.500V7.400L1 5.900l1.500-2.600 2 .6L6 3z" /></Svg>
                  </Slot>
                </Ask>
                <Showing>
                  <div>Showing<br />results<br />for</div>
                  <Restated>Top <b>10</b> city <b>of sales data by</b><br /><b>total price per unit</b> as<br />clustered bar chart</Restated>
                </Showing>
                <InfoRow><Info /></InfoRow>
                <Chart>
                  <YTitle>City</YTitle>
                  <Categories>{bars.map(([n]) => <div key={n}>{n}</div>)}</Categories>
                  <Plot>{bars.map(([n, w]) => <Bar key={n} style={{ width: w }} />)}</Plot>
                  <Track><Thumb /></Track>
                </Chart>
                <Ticks><span>0M</span><span>50M</span></Ticks>
                <XTitle>Sum of Price Per Unit</XTitle>
              </QaCard>
              <PageEdge />
            </Report>
            <Filters>
              <Double flip c="#333" />
              <Slot $w={12} $ml={7} $mt={25}>
                <Svg s={12} stroke="#333" strokeWidth={1.5}><path d="M11 0v12M7 2v8M3 4v4" /></Svg>
              </Slot>
              <FiltersText>Filters</FiltersText>
            </Filters>
          </Stage>
          <Pages>
            <PageTools>
              <Slot $w={30}>
                <Svg s={30} h={38} stroke="#f0f0f0" strokeWidth={2}><rect x="6" y="2" width="17.500" height="14.500" rx="3" /><path d="M11 17v3M18 17v3M8 21.500h13" /><rect x="0" y="28" width="30" height="4" rx="1.500" fill={C.teal} stroke="none" /></Svg>
              </Slot>
              <Slot $w={14} $ml={33}>
                <Svg s={14} h={24} stroke="#f0f0f0" strokeWidth={2}><rect x="1" y="1" width="11" height="21" rx="2.500" /><path d="M5 18.500h4" /></Svg>
              </Slot>
              <Slot $w={8} $ml={27} $mt={9}><Svg s={8} h={11} strokeWidth={1.1}><path d="M6 1v9L1 5.500z" /></Svg></Slot>
              <Slot $w={8} $ml={19} $mt={9}><Svg s={8} h={11} strokeWidth={1.1}><path d="M1 1v9l5-4.500z" /></Svg></Slot>
            </PageTools>
            <PageTab $w={123}>Dashboard</PageTab>
            <PageTab $w={132} $ls={0.17}>MTD Report</PageTab>
            <PageTab $w={195}>Same Period Last Year</PageTab>
            <PageTab $w={161} $ls={0.12} $active>Q&amp;A Dashboard</PageTab>
            <AddPage><Svg s={14} stroke="#1f2b29" strokeWidth={3.4}><path d="M7 0v14M0 7h14" /></Svg></AddPage>
          </Pages>
        </Center>

        <Pane $w={226}>
          <PaneHead $ls={0.27}>Visualizations<Double /></PaneHead>
          <BuildTitle>Build visual</BuildTitle>
          <ModeRow>
            <Mode $on>
              <Svg s={30}>
                <path d="M0 .8h24" />
                <g fill={C.teal} strokeWidth={1.5} strokeDasharray="2.500 1.500"><path d="M1 7.500h28v8H1zM1 20.500h28v8H1z" /></g>
              </Svg>
            </Mode>
            <Slot $w={30} $ml={48} $mt={5}>
              <Svg s={30} strokeWidth={1.4}><path d="M5 29.500H1V1h12M22 12v-2" /><path d="M13 1v9h9z" fill="#fff" /><path d="M29.500 11.500L17 23l3 3L30 12zM6 29c4 0 4-6 9-6l4 4c-2 3-8 3-13 2zM17 23l-2 1M20 26l-1 1" /></Svg>
            </Slot>
          </ModeRow>
          <NotchRule><Svg s={225} h={10} stroke={C.line} strokeWidth={1}><path d="M0 9.500h20l10-10 10 10h185" /></Svg></NotchRule>
          <Gallery>{gallery.map((g, i) => <Svg key={i} s={23} v="0 0 69 69" strokeWidth={3}>{g}</Svg>)}</Gallery>
          <FieldLabel $h={38} $pt={3}>Values</FieldLabel>
          <Drop $h={35} $pl={12}>Add data fields here</Drop>
          <FieldLabel $h={44} $pt={2} $bold>Drill through</FieldLabel>
          <FieldLabel $h={22}>Cross-report<Toggle><Knob />Off</Toggle></FieldLabel>
          <FieldLabel $h={45}>Keep all filters<Toggle $on><Knob $on />On</Toggle></FieldLabel>
          <Drop $h={33} $pl={10} $dark>Add drill-through fields here</Drop>
        </Pane>

        <Pane $w={226}>
          <PaneHead>Data<Double /></PaneHead>
          <Search>
            <Svg s={18} stroke="#b0b0b0" strokeWidth={1.3}><circle cx="7" cy="7" r="6" /><path d="M11.500 11.500l6 6" /></Svg>
            Search
          </Search>
          {['Custom_Calendar', 'Sales_Data'].map(n => (
            <TableRow key={n}>
              <Svg s={7} h={11}><path d="M1 .8l5 4.700-5 4.700" /></Svg>
              <TableIcon />
              {n}
            </TableRow>
          ))}
        </Pane>
      </Body>

      <Status>
        <PageCount>Page 4 of 4</PageCount>
        <Spacer />
        <Svg s={153} h={14} strokeWidth={1}>
          <path d="M0 6.500h6M144 6.500h9M148.500 2v9" strokeWidth={2} />
          <path d="M12 6.500h125M74.500 3v7" />
          <rect x="62" y="0" width="5" height="13" fill="#d8d8d8" stroke="none" />
        </Svg>
        <Zoom>86%</Zoom>
        <Svg s={18} h={13} strokeWidth={1.4}><rect x="1" y="1" width="16" height="11" rx="1.500" /><path d="M6 3.500H4V5M4 8v1.500h2M12 3.500h2V5M14 8v1.500h-2" /></Svg>
      </Status>
    </Window>
  );
}
